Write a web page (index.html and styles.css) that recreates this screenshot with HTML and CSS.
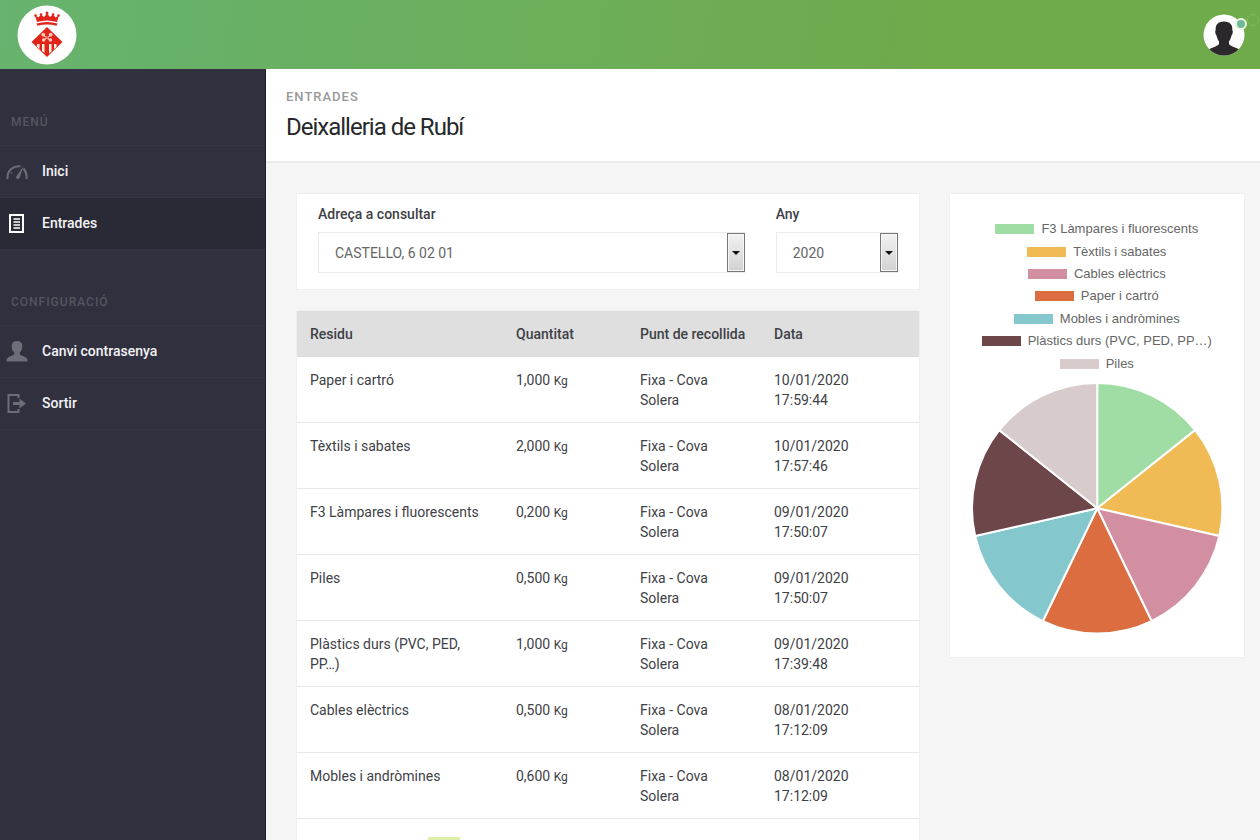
FILE: index.html
```html
<!DOCTYPE html>
<html lang="ca">
<head>
<meta charset="utf-8">
<meta name="viewport" content="width=device-width, initial-scale=1">
<title>Deixalleria de Rubí</title>
<link rel="stylesheet" href="styles.css">
</head>
<body>
<div class="app">
  <header class="topbar">
    <a class="brand" href="#" aria-label="Rubí">
      <svg viewBox="0 0 60 60" width="60" height="60">
        <circle cx="30" cy="30" r="29.500" fill="#fff"/>
        <g fill="#e2231a">
          <path d="M19.500 18.500Q30 15.500 40.500 18.500L39.500 20.800Q30 18 20.500 20.800Z"/>
          <path d="M20 17L18 10.500L21.500 12.500L24 9.500L27 12L30 8.500L33 12L36 9.500L38.500 12.500L42 10.500L40 17Q30 14 20 17Z"/>
          <circle cx="18.500" cy="10.500" r="1.300"/><circle cx="24" cy="9.500" r="1.300"/><circle cx="30" cy="8" r="1.500"/><circle cx="36" cy="9.500" r="1.300"/><circle cx="41.500" cy="10.500" r="1.300"/>
          <path d="M30 22L45.500 37L30 52L14.500 37Z"/>
        </g>
        <g fill="#fff5e0">
          <path d="M20 39H22.500V44L20 41.700ZM25 39H27.500V48L25 46ZM32 39H34.500V46.500L32 48.500ZM37 39H39.500V42L37 44.200Z"/>
        </g>
        <g fill="#ffc9bd">
          <circle cx="26.300" cy="29.700" r="1.900"/><circle cx="33.700" cy="29.700" r="1.900"/><circle cx="26.600" cy="35" r="1.700"/><circle cx="33.400" cy="35" r="1.700"/><path d="M27 30L33.500 34.500L32.500 35.500L26.500 31ZM33 30L26.500 34.500L27.500 35.500L33.500 31Z"/>
        </g>
      </svg>
    </a>
    <button class="user" type="button" aria-label="Usuari">
      <svg viewBox="0 0 42 42" width="42" height="42">
        <clipPath id="disc"><circle cx="21" cy="21" r="20.500"/></clipPath>
        <circle cx="21" cy="21" r="20.500" fill="#fff"/>
        <path clip-path="url(#disc)" fill="#2b272a" d="M21 7.500C27 7.500 29.800 11 29.300 16C30.300 17 29.700 20.500 28.500 21.500C28 24 27 26 26 27.500V30C28 33 34 33.500 37 36V42H5V36C8 33.500 14 33 16 30V27.500C15 26 14 24 13.500 21.500C12.300 20.500 11.700 17 12.700 16C12.200 11 15 7.500 21 7.500Z"/>
      </svg>
      <span class="status"></span>
      <span class="ripple"></span>
    </button>
  </header>

  <div class="body">
    <nav class="sidebar">
      <h2 class="nav-title">MENÚ</h2>
      <ul class="nav-list">
        <li><a class="nav-link" href="#">
          <svg class="nav-icon" viewBox="0 0 22 22"><g fill="none" stroke="currentColor" stroke-width="2"><path d="M1.500 19C1 11 6 6 14.500 6.300"/><path d="M17.500 8.500C20 11.500 21 15 20.500 19"/><path d="M4.500 12L6.500 13.500" stroke-width="1"/></g><path fill="currentColor" d="M17.500 6L13.500 18C12.500 20 9.500 19 10.300 16.500Z"/></svg>
          Inici</a></li>
        <li><a class="nav-link active" href="#">
          <svg class="nav-icon" viewBox="0 0 22 22"><g fill="none" stroke="currentColor" stroke-width="2"><path d="M4 3H17V20H4Z"/><path d="M7.500 7H14M7.500 10H14M7.500 13H14M7.500 16H14" stroke-width="1.500"/></g></svg>
          Entrades</a></li>
      </ul>
      <h2 class="nav-title">CONFIGURACIÓ</h2>
      <ul class="nav-list">
        <li><a class="nav-link" href="#">
          <svg class="nav-icon" viewBox="0 0 22 22"><path fill="currentColor" d="M11 1C15 1 16.500 3.500 16.300 6.500C16.200 9 15.500 11 13.800 12.500V14.500C15.500 16 21 16.500 21.500 20V21.500H.5V20C1 16.500 6.500 16 8.200 14.500V12.500C6.500 11 5.800 9 5.700 6.500C5.500 3.500 7 1 11 1Z"/></svg>
          Canvi contrasenya</a></li>
        <li><a class="nav-link" href="#">
          <svg class="nav-icon" viewBox="0 0 22 22"><path fill="none" stroke="currentColor" stroke-width="2" d="M12.500 6V3H2.500V20H12.500V17"/><path fill="currentColor" d="M7 10H13.500V6.500L20 11.500L13.500 16.500V13H7Z"/></svg>
          Sortir</a></li>
      </ul>
    </nav>

    <main class="main">
      <div class="page-head">
        <p class="crumb">ENTRADES</p>
        <h1 class="title">Deixalleria de Rubí</h1>
      </div>
      <div class="content">
        <div class="left">
          <form class="card filters">
            <div class="field">
              <label for="adreca">Adreça a consultar</label>
              <div class="select"><select id="adreca"><option>CASTELLO, 6 02 01</option></select></div>
            </div>
            <div class="field">
              <label for="any">Any</label>
              <div class="select"><select id="any"><option>2020</option></select></div>
            </div>
          </form>
          <div class="card">
            <table class="entries">
              <colgroup><col class="c-waste"><col class="c-qty"><col class="c-point"><col></colgroup>
              <thead><tr><th>Residu</th><th>Quantitat</th><th>Punt de recollida</th><th>Data</th></tr></thead>
              <tbody>
                <tr><td>Paper i cartró</td><td>1,000 <small>Kg</small></td><td>Fixa - Cova<br>Solera</td><td>10/01/2020<br>17:59:44</td></tr>
                <tr><td>Tèxtils i sabates</td><td>2,000 <small>Kg</small></td><td>Fixa - Cova<br>Solera</td><td>10/01/2020<br>17:57:46</td></tr>
                <tr><td>F3 Làmpares i fluorescents</td><td>0,200 <small>Kg</small></td><td>Fixa - Cova<br>Solera</td><td>09/01/2020<br>17:50:07</td></tr>
                <tr><td>Piles</td><td>0,500 <small>Kg</small></td><td>Fixa - Cova<br>Solera</td><td>09/01/2020<br>17:50:07</td></tr>
                <tr><td>Plàstics durs (PVC, PED,<br>PP…)</td><td>1,000 <small>Kg</small></td><td>Fixa - Cova<br>Solera</td><td>09/01/2020<br>17:39:48</td></tr>
                <tr><td>Cables elèctrics</td><td>0,500 <small>Kg</small></td><td>Fixa - Cova<br>Solera</td><td>08/01/2020<br>17:12:09</td></tr>
                <tr><td>Mobles i andròmines</td><td>0,600 <small>Kg</small></td><td>Fixa - Cova<br>Solera</td><td>08/01/2020<br>17:12:09</td></tr>
              </tbody>
            </table>
            <div class="table-foot"><span class="page-mark"></span></div>
          </div>
        </div>
        <section class="card chart">
          <ul class="legend">
            <li><span class="swatch green"></span>F3 Làmpares i fluorescents</li>
            <li><span class="swatch yellow"></span>Tèxtils i sabates</li>
            <li><span class="swatch pink"></span>Cables elèctrics</li>
            <li><span class="swatch orange"></span>Paper i cartró</li>
            <li><span class="swatch teal"></span>Mobles i andròmines</li>
            <li><span class="swatch plum"></span>Plàstics durs (PVC, PED, PP…)</li>
            <li><span class="swatch grey"></span>Piles</li>
          </ul>
          <svg class="pie" viewBox="-126 -126 252 252" role="img" aria-label="Residus">
            <g stroke="#fff" stroke-width="2" stroke-linejoin="round">
              <path fill="#a0dda4" d="M0 0L0 -126A126 126 0 0 1 98.510 -78.560Z"/>
              <path fill="#f0bb54" d="M0 0L98.510 -78.560A126 126 0 0 1 122.840 28.040Z"/>
              <path fill="#d28fa1" d="M0 0L122.840 28.040A126 126 0 0 1 54.670 113.520Z"/>
              <path fill="#db6d40" d="M0 0L54.670 113.520A126 126 0 0 1 -54.670 113.520Z"/>
              <path fill="#84c7cd" d="M0 0L-54.670 113.520A126 126 0 0 1 -122.840 28.040Z"/>
              <path fill="#6d464a" d="M0 0L-122.840 28.040A126 126 0 0 1 -98.510 -78.560Z"/>
              <path fill="#d7cbcb" d="M0 0L-98.510 -78.560A126 126 0 0 1 0 -126Z"/>
            </g>
          </svg>
        </section>
      </div>
    </main>
  </div>
</div>
</body>
</html>
```

FILE: styles.css
```css
*, *::before, *::after { box-sizing: border-box; }
body {
  margin: 0;
  font-family: Roboto, "Liberation Sans", sans-serif;
  font-size: 14px;
  line-height: 20px;
  color: #3e4146;
  background: #f5f5f5;
}
h1, h2, p, ul { margin: 0; padding: 0; }
ul { list-style: none; }

.app { display: flex; flex-direction: column; height: 100vh; overflow: hidden; }

.topbar {
  display: flex;
  flex: none;
  align-items: center;
  justify-content: space-between;
  height: 69px;
  padding: 0 15px 0 17px;
  background: linear-gradient(100deg, #67b36f, #6faa4b 75%);
}
.brand { display: flex; }
.user { position: relative; display: flex; padding: 0; border: 0; background: none; }
.status {
  position: absolute;
  top: 4px;
  right: -2px;
  width: 12px;
  height: 12px;
  border: 2px solid #e9f7e0;
  border-radius: 50%;
  background: #6fb996;
}
.ripple {
  position: absolute;
  top: 0;
  right: -14px;
  width: 12px;
  height: 12px;
  border: 1px solid #80b85e;
  border-radius: 50%;
}

.body { display: flex; flex: 1; min-height: 0; }

.sidebar {
  flex: none;
  width: 266px;
  padding-top: 42px;
  background: #30303f;
  border-right: 1px solid #1f1f2b;
}
.nav-title {
  padding: 0 11px 12px;
  font-size: 12px;
  font-weight: 500;
  line-height: 22px;
  letter-spacing: 1px;
  color: #55565f;
}
.nav-list { margin-bottom: 41px; border-top: 1px solid #353544; }
.nav-link {
  display: flex;
  align-items: center;
  gap: 14px;
  height: 52px;
  padding: 0 6px 2px;
  border-bottom: 1px solid #353544;
  font-weight: 500;
  color: #f2f2f4;
  text-decoration: none;
}
.nav-icon { width: 22px; height: 22px; color: #6c6d77; }
.nav-link.active { background: #292a35; }
.active .nav-icon { color: #fff; }

.main { flex: 1; min-width: 0; overflow: hidden; }
.page-head { padding: 18px 20px; background: #fff; border-bottom: 2px solid #ebebeb; }
.crumb { font-size: 13px; font-weight: 500; letter-spacing: 1px; color: #999; }
.title { padding-top: 4px; font-size: 24px; font-weight: 400; line-height: 32px; letter-spacing: -1px; color: #26282b; }

.content {
  display: grid;
  grid-template-columns: minmax(0, 19fr) minmax(0, 9fr);
  gap: 31px;
  align-items: start;
  padding: 31px 16px 30px 31px;
}
.left { display: grid; gap: 22px; }
.card { background: #fff; box-shadow: 0 0 0 1px #efefef; }

.filters { display: grid; grid-template-columns: 7fr 2fr; gap: 31px; padding: 10px 21px 16px; }
.field label { display: block; margin-bottom: 8px; font-weight: 500; }
.select { position: relative; }
.select select {
  appearance: none;
  display: block;
  width: 100%;
  height: 41px;
  padding: 0 24px 0 16px;
  border: 1px solid #ebebeb;
  border-radius: 0;
  background: #fff;
  font: inherit;
  color: #666;
}
.select::before {
  content: "";
  position: absolute;
  inset: 1px 0 1px auto;
  width: 18px;
  border: 1px solid #777;
  background: linear-gradient(#f2f2f2, #d2d2d2);
  box-shadow: inset 0 0 0 1px #f6f6f6;
  pointer-events: none;
}
.select::after {
  content: "";
  position: absolute;
  top: 19px;
  right: 5px;
  border: 4px solid transparent;
  border-top-color: #111;
  pointer-events: none;
}

.entries { width: 100%; table-layout: fixed; border-collapse: collapse; }
.c-waste { width: 206px; }
.c-qty { width: 124px; }
.c-point { width: 134px; }
.entries th { padding: 13px; font-weight: 500; text-align: left; background: #dfdfdf; }
.entries td { padding: 13px 13px 12px; border-bottom: 1px solid #e8e8e8; vertical-align: top; }
.entries small { font-size: 12px; }
.table-foot { height: 60px; padding: 18px 131px; }
.page-mark { display: block; width: 32px; height: 24px; background: #dcefaa; }

.chart { padding: 24px 22px; }
.legend {
  display: grid;
  grid-auto-rows: 1fr;
  height: 157px;
  font-family: "Liberation Sans", Arial, sans-serif;
  font-size: 13px;
  color: #666;
}
.legend li { display: flex; align-items: center; justify-content: center; gap: 7px; }
.swatch { width: 39px; height: 10px; }
.green { background: #a0dda4; }
.yellow { background: #f0bb54; }
.pink { background: #d28fa1; }
.orange { background: #db6d40; }
.teal { background: #84c7cd; }
.plum { background: #6d464a; }
.grey { background: #d7cbcb; }
.pie { display: block; width: 100%; margin-top: 8px; }
```
